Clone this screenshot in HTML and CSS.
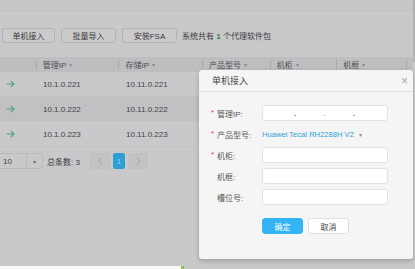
FILE: index.html
```html
<!DOCTYPE html>
<html lang="zh-CN">
<head>
<meta charset="utf-8">
<title>单机接入</title>
<link rel="stylesheet" href="styles.css">
</head>
<body>
<div class="page">
  <div class="topbar"></div>
  <div class="toolbar">
    <button class="btn btn-a">单机接入</button>
    <button class="btn btn-b">批量导入</button>
    <button class="btn btn-b">安装FSA</button>
    <span class="summary">系统共有 <b>1</b> 个代理软件包</span>
  </div>
  <div class="table">
    <div class="row head">
      <div class="cell c0"></div>
      <div class="cell c1"><span class="div"></span>管理IP <span class="caret">▾</span></div>
      <div class="cell c2"><span class="div"></span>存储IP <span class="caret">▾</span></div>
      <div class="cell c3"><span class="div"></span>产品型号 <span class="caret">▾</span></div>
      <div class="cell c4"><span class="div"></span>机柜 <span class="caret">▾</span></div>
      <div class="cell c5"><span class="div"></span>机框 <span class="caret">▾</span></div>
      <div class="cell c6"><span class="div"></span></div>
    </div>
    <div class="row">
      <div class="cell c0"><svg class="go" viewBox="0 0 9 8"><path d="M0.5 4H8M4.8 0.8L8 4L4.8 7.2"/></svg></div>
      <div class="cell c1">10.1.0.221</div>
      <div class="cell c2">10.11.0.221</div>
    </div>
    <div class="row alt">
      <div class="cell c0"><svg class="go" viewBox="0 0 9 8"><path d="M0.5 4H8M4.8 0.8L8 4L4.8 7.2"/></svg></div>
      <div class="cell c1">10.1.0.222</div>
      <div class="cell c2">10.11.0.222</div>
    </div>
    <div class="row">
      <div class="cell c0"><svg class="go" viewBox="0 0 9 8"><path d="M0.5 4H8M4.8 0.8L8 4L4.8 7.2"/></svg></div>
      <div class="cell c1">10.1.0.223</div>
      <div class="cell c2">10.11.0.223</div>
    </div>
  </div>
  <div class="pager">
    <div class="size"><span class="size-val">10</span><span class="size-caret">▾</span></div>
    <span class="total">总条数: 3</span>
    <span class="pg pg-nav"><svg viewBox="0 0 6 10"><path d="M4.5 1L1 5L4.5 9"/></svg></span>
    <span class="pg pg-on">1</span>
    <span class="pg pg-nav"><svg viewBox="0 0 6 10"><path d="M1.5 1L5 5L1.5 9"/></svg></span>
  </div>
  <div class="footer"><span class="footer-white"></span><span class="footer-mark"></span></div>
</div>
<div class="edge"></div>

<div class="modal">
  <div class="modal-head">单机接入<span class="close">×</span></div>
  <div class="modal-body">
    <div class="frow"><label class="req">管理IP:</label><div class="input ip"><i></i><i></i><i></i></div></div>
    <div class="frow"><label class="req">产品型号:</label><span class="link">Huawei Tecal RH2288H V2</span><span class="caret link-caret">▾</span></div>
    <div class="frow"><label class="req">机柜:</label><div class="input"></div></div>
    <div class="frow"><label>机框:</label><div class="input"></div></div>
    <div class="frow"><label>槽位号:</label><div class="input"></div></div>
    <div class="actions">
      <button class="mbtn ok">确定</button>
      <button class="mbtn cancel">取消</button>
    </div>
  </div>
</div>
</body>
</html>
```

FILE: styles.css
```css
* { box-sizing: border-box; }
html, body { margin: 0; padding: 0; }
body {
  width: 415px;
  height: 269px;
  overflow: hidden;
  background: #c9c8ca;
  font-family: "Liberation Sans", "Noto Sans CJK SC", sans-serif;
  font-size: 8px;
  color: #434245;
  position: relative;
}
.page {
  height: 269px;
  display: flex;
  flex-direction: column;
  padding-right: 2px;
}
.edge {
  position: absolute;
  right: 0;
  top: 0;
  width: 2px;
  height: 62px;
  background: #b3b2b5;
}
.topbar {
  height: 11px;
  border-bottom: 1px solid #c1c0c2;
  background: #c7c6c8;
}
.toolbar {
  display: flex;
  align-items: center;
  padding: 11px 0 0 2px;
  height: 37px;
  gap: 7px;
}
.btn {
  height: 15px;
  padding: 0;
  border: 1px solid #b4b3b6;
  border-radius: 3px;
  background: #cbcacc;
  font: inherit;
  color: #3a393c;
}
.btn-a { width: 53px; }
.btn-b { width: 55px; margin-left: -1px; }
.summary { margin-left: -2px; color: #3a393c; }
.summary b { color: #2e8a40; font-weight: bold; }

.table { margin-top: 9px; }
.row {
  display: flex;
  height: 25px;
  align-items: center;
  border-bottom: 1px solid #c3c2c4;
}
.row.alt { background: #c1c0c2; }
.row.head {
  height: 15px;
  background: #bebdc0;
  border-bottom: none;
  color: #4e4d50;
}
.cell {
  display: flex;
  align-items: center;
  padding-left: 7px;
  height: 100%;
  position: relative;
}
.div {
  position: absolute;
  left: 0;
  top: 3px;
  width: 1px;
  height: 9px;
  background: #a9a8ab;
}
.caret { color: #8b8a8d; font-size: 6px; margin-left: 3px; }
.c0 { width: 36px; padding-left: 6px; }
.c1 { width: 83px; }
.c2 { width: 84px; }
.c3 { width: 68px; }
.c4 { width: 67px; }
.c5 { width: 70px; }
.c6 { width: 5px; }
.go { width: 9px; height: 8px; fill: none; stroke: #4aa672; stroke-width: 1.1; }

.pager {
  display: flex;
  align-items: center;
  margin-top: 6px;
  height: 16px;
}
.size {
  width: 43px;
  height: 16px;
  border: 1px solid #b9b8bb;
  border-left: none;
  border-radius: 0 3px 3px 0;
  display: flex;
}
.size-val { width: 27px; padding-left: 3px; display: flex; align-items: center; border-right: 1px solid #b9b8bb; }
.size-caret { flex: 1; display: flex; align-items: center; justify-content: center; font-size: 6px; color: #6e6d70; }
.total { margin-left: 4px; width: 43px; color: #3a393c; }
.pg {
  height: 16px;
  border-radius: 2px;
  display: flex;
  align-items: center;
  justify-content: center;
}
.pg-nav { width: 20px; background: #c3c2c5; border: 1px solid #c0bfc2; }
.pg-nav svg { width: 5px; height: 8px; fill: none; stroke: #99989b; stroke-width: 1; }
.pg-on { width: 12px; margin: 0 3px; background: #2d9fd2; color: #9cd2ee; }

.footer {
  margin-top: auto;
  height: 3px;
  display: flex;
}
.footer-white { width: 181px; background: #f7f7f7; }
.footer-mark { width: 3px; background: #8bc34a; }

.modal {
  position: absolute;
  left: 199px;
  top: 70px;
  width: 214px;
  height: 189px;
  background: #f5f5f5;
  border-radius: 3px;
  box-shadow: 0 2px 5px rgba(0, 0, 0, 0.22);
}
.modal-head {
  height: 22px;
  padding-left: 13px;
  display: flex;
  align-items: center;
  font-size: 9px;
  color: #444;
  border-bottom: 1px solid #e3e3e3;
  position: relative;
}
.close {
  position: absolute;
  right: 5px;
  top: 5px;
  font-size: 12px;
  line-height: 12px;
  color: #a8a8a8;
}
.modal-body {
  padding: 13px 0 0 11px;
  display: flex;
  flex-direction: column;
  gap: 5px;
}
.frow {
  height: 16px;
  display: flex;
  align-items: center;
}
.frow label {
  width: 52px;
  padding-left: 7px;
  color: #555;
  position: relative;
}
.frow label.req::before {
  content: "*";
  position: absolute;
  left: 1px;
  top: 0;
  color: #e33b3b;
}
.input {
  width: 126px;
  height: 16px;
  background: #fff;
  border: 1px solid #e2e2e2;
  border-radius: 3px;
}
.input.ip {
  display: flex;
  padding-left: 31px;
  gap: 28px;
  align-items: center;
  padding-top: 5px;
}
.input.ip i {
  width: 1.5px;
  height: 1.5px;
  background: #888;
  border-radius: 50%;
}
.link { color: #2c9fd9; font-size: 7.6px; }
.link-caret { margin-left: 5px; }
.actions {
  display: flex;
  gap: 5px;
  padding-left: 52px;
  margin-top: 8px;
}
.mbtn {
  width: 41px;
  height: 16px;
  padding: 0;
  border-radius: 3px;
  font: inherit;
}
.ok { background: #33b4f4; border: 1px solid #33b4f4; color: #fff; }
.cancel { background: #fff; border: 1px solid #e0e0e0; color: #444; }
```
